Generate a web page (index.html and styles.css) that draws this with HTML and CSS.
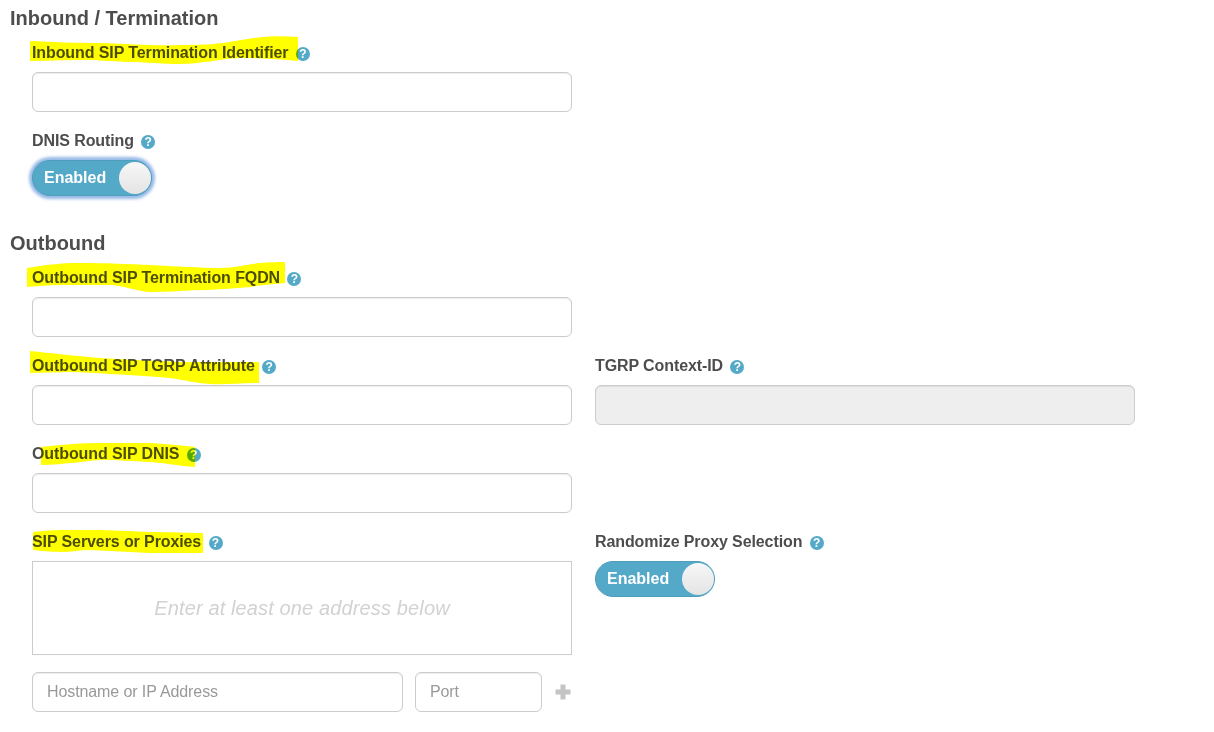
FILE: index.html
```html
<!DOCTYPE html>
<html lang="en">
<head>
<meta charset="utf-8">
<title>SIP Trunk</title>
<link rel="stylesheet" href="styles.css">
</head>
<body>
<main class="page">
  <h2 class="heading heading-first">Inbound / Termination</h2>
  <div class="grid">
    <div class="field">
      <label class="label">Inbound SIP Termination Identifier <span class="help">?</span></label>
      <input class="input" type="text">
    </div>
    <div class="field field-start">
      <label class="label">DNIS Routing <span class="help">?</span></label>
      <div class="toggle toggle-focus"><span class="toggle-text">Enabled</span><span class="knob"></span></div>
    </div>
  </div>

  <h2 class="heading heading-second">Outbound</h2>
  <div class="grid">
    <div class="field">
      <label class="label">Outbound SIP Termination FQDN <span class="help">?</span></label>
      <input class="input" type="text">
    </div>
    <div class="row">
      <div class="field">
        <label class="label">Outbound SIP TGRP Attribute <span class="help">?</span></label>
        <input class="input" type="text">
      </div>
      <div class="field">
        <label class="label">TGRP Context-ID <span class="help">?</span></label>
        <input class="input" type="text" disabled>
      </div>
    </div>
    <div class="field">
      <label class="label">Outbound SIP DNIS <span class="help">?</span></label>
      <input class="input" type="text">
    </div>
    <div class="row">
      <div class="field">
        <label class="label">SIP Servers or Proxies <span class="help">?</span></label>
        <div class="list-box">Enter at least one address below</div>
        <div class="add-row">
          <input class="input input-host" type="text" placeholder="Hostname or IP Address">
          <input class="input input-port" type="text" placeholder="Port">
          <svg class="plus" width="18" height="18" viewBox="0 0 18 18"><path d="M6.5 1.5h5v5h5v5h-5v5h-5v-5h-5v-5h5z" fill="#c4c4c4"/></svg>
        </div>
      </div>
      <div class="field">
        <label class="label">Randomize Proxy Selection <span class="help">?</span></label>
        <div class="toggle"><span class="toggle-text">Enabled</span><span class="knob"></span></div>
      </div>
    </div>
  </div>
</main>
<svg class="marker" width="1214" height="732" viewBox="0 0 1214 732">
  <path d="M30 41C55 42 75 43 100 43C130 44 155 46 180 45C205 45 220 44 235 41C255 37 275 35 298 37L298 61C290 60 265 58 240 58C220 59 200 64 180 64C160 64 145 62 130 62C110 61 95 60 80 60C60 60 45 61 30 61Z"/>
  <path d="M27 268C45 265 60 263 80 263C105 263 130 264 150 265C175 266 200 268 220 268C235 268 250 264 260 263C270 262 278 262 285 262L285 283C272 284 262 285 250 287C235 288 215 290 200 290C180 291 165 292 150 292C135 291 122 285 110 285C90 285 75 285 60 285C48 285 38 286 27 287Z"/>
  <path d="M30 351C50 353 75 356 100 358C135 360 170 362 200 362C220 362 240 362 259 362L259 383C240 383 225 385 210 384C195 383 185 380 170 378C150 376 130 375 110 374C95 373 82 372 70 372C55 372 42 373 30 373Z"/>
  <path d="M41 447C60 445 80 443 100 443C118 443 135 443 150 443C165 444 180 445 195 447L195 467C180 466 165 463 150 462C133 461 115 460 100 460C90 460 80 463 70 463C60 464 50 465 41 465Z"/>
  <path d="M33 532C42 531 50 530 60 530C75 530 88 530 100 530C118 531 135 531 150 532C170 532 188 533 203 533L203 553C185 553 168 553 150 553C130 552 110 551 90 550C80 550 72 552 63 552C53 552 43 551 33 550Z"/>
</svg>
</body>
</html>
```
FILE: styles.css
```css
html, body {
  margin: 0;
  padding: 0;
  background: #fff;
}

body {
  position: relative;
  height: 732px;
  overflow: hidden;
  font-family: "Liberation Sans", Arial, sans-serif;
  color: #4d4d4d;
}

.page {
  display: flex;
  flex-direction: column;
  padding-left: 10px;
}

.heading {
  margin: 0;
  font-size: 20px;
  line-height: 20px;
  font-weight: 700;
  color: #4d4d4d;
}

.heading-first { margin-top: 8px; }
.heading-second { margin-top: 37px; }

.grid {
  display: flex;
  flex-direction: column;
  gap: 19px;
  padding-left: 22px;
  margin-top: 15px;
}

.row {
  display: grid;
  grid-template-columns: 540px 540px;
  column-gap: 23px;
}

.field {
  display: flex;
  flex-direction: column;
  width: 540px;
}

.label {
  display: block;
  height: 20px;
  margin-bottom: 9px;
  font-size: 16px;
  line-height: 20px;
  letter-spacing: -0.1px;
  font-weight: 700;
  color: #4d4d4d;
}

.help {
  display: inline-block;
  width: 14px;
  height: 14px;
  margin-left: 3px;
  border-radius: 50%;
  background: #55a9c8;
  color: #fff;
  font-size: 12px;
  line-height: 14px;
  letter-spacing: 0;
  font-weight: 700;
  text-align: center;
  vertical-align: 0;
}

.input {
  display: block;
  box-sizing: border-box;
  width: 100%;
  height: 40px;
  margin: 0;
  padding: 0 14px;
  border: 1px solid #ccc;
  border-radius: 6px;
  background: #fff;
  box-shadow: inset 0 1px 1px rgba(0, 0, 0, 0.075);
  font-family: inherit;
  font-size: 16px;
  letter-spacing: -0.1px;
  color: #4d4d4d;
  outline: none;
}

.input:disabled {
  background: #eee;
}

.input::placeholder {
  color: #999;
  opacity: 1;
}

.toggle {
  display: flex;
  align-items: center;
  justify-content: space-between;
  box-sizing: border-box;
  width: 120px;
  height: 36px;
  padding: 1px 0 1px 11px;
  border: 1px solid #4e9dba;
  border-radius: 18px;
  background: #55a9c8;
}

.toggle-focus {
  box-shadow: 0 0 3px 3px rgba(82, 140, 215, 0.6);
}

.toggle-text {
  font-size: 16px;
  font-weight: 700;
  color: #fff;
}

.knob {
  width: 32px;
  height: 32px;
  border-radius: 50%;
  background: linear-gradient(#f7f7f7, #e4e4e4);
}

.list-box {
  display: flex;
  align-items: center;
  justify-content: center;
  box-sizing: border-box;
  height: 94px;
  border: 1px solid #ccc;
  font-size: 20px;
  letter-spacing: 0.13px;
  font-style: italic;
  color: #d2d2d2;
}

.add-row {
  display: flex;
  align-items: center;
  gap: 12px;
  margin-top: 17px;
}

.input-host { width: 371px; }
.input-port { width: 127px; }
.plus { flex: none; }

.marker {
  position: absolute;
  top: 0;
  left: 0;
  fill: #ffff00;
  mix-blend-mode: multiply;
  pointer-events: none;
}
```
